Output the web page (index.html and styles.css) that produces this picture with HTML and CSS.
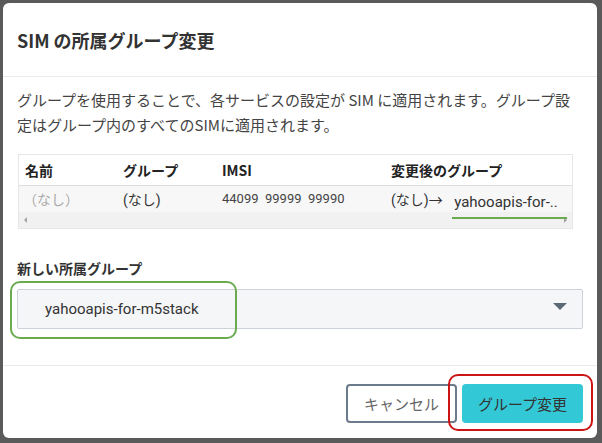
FILE: index.html
```html
<!DOCTYPE html>
<html lang="ja">
<head>
    <meta charset="UTF-8">
    <meta name="viewport" content="width=device-width, initial-scale=1.0">
    <title>SIM の所属グループ変更</title>
    <link rel="stylesheet" href="styles.css">
</head>
<body>
    <div class="dialog">
        <!-- ヘッダー -->
        <div class="dialog-header">
            <h1>SIM の所属グループ変更</h1>
        </div>

        <!-- 本文 -->
        <div class="dialog-body">
            <p class="intro">グループを使用することで、各サービスの設定が SIM に適用されます。グループ設定はグループ内のすべてのSIMに適用されます。</p>

            <div class="table-wrap">
                <table class="sim-table">
                    <thead>
                        <tr>
                            <th class="col-name">名前</th>
                            <th class="col-group">グループ</th>
                            <th class="col-imsi">IMSI</th>
                            <th>変更後のグループ</th>
                        </tr>
                    </thead>
                    <tbody>
                        <tr>
                            <td class="muted">（なし）</td>
                            <td>(なし)</td>
                            <td class="imsi">44099&nbsp; 99999&nbsp; 99990</td>
                            <td>(なし)→ <span class="new-group">yahooapis-for-..</span></td>
                        </tr>
                    </tbody>
                </table>
                <div class="scroll-bar">
                    <span class="arrow-left"></span>
                    <span class="arrow-right"></span>
                </div>
                <div class="mark-line"></div>
            </div>

            <label class="field-label" for="group">新しい所属グループ</label>
            <div class="field">
                <div class="select-box" id="group">
                    <span>yahooapis-for-m5stack</span>
                    <span class="caret"></span>
                </div>
                <div class="mark-green"></div>
            </div>
        </div>

        <!-- フッター -->
        <div class="dialog-footer">
            <button class="btn btn-cancel">キャンセル</button>
            <button class="btn btn-primary">グループ変更</button>
        </div>
    </div>
</body>
</html>
```

FILE: styles.css
```css
body {
    margin: 0;
    padding: 3px;
    background-color: #5a5a5a;
    font-family: "Noto Sans CJK JP", "Noto Sans", sans-serif;
    color: #444;
}
.dialog {
    width: 594px;
    height: 435px;
    background-color: #fff;
    border-radius: 6px;
    display: flex;
    flex-direction: column;
    box-sizing: border-box;
}
.dialog-header {
    height: 73px;
    padding: 0 14px;
    display: flex;
    align-items: center;
    border-bottom: 1px solid #e9ecef;
}
.dialog-header h1 {
    margin: 0;
    font-size: 18px;
    font-weight: 700;
    color: #333;
}
.dialog-body {
    padding: 10px 14px 36px;
}
.intro {
    margin: 0 0 17px;
    font-size: 15px;
    line-height: 25px;
    color: #444;
}
.table-wrap {
    position: relative;
    width: 555px;
    margin-left: 1px;
    border: 1px solid #e6e6e6;
    box-sizing: border-box;
}
.sim-table {
    width: 100%;
    table-layout: fixed;
    border-collapse: collapse;
    font-size: 14px;
    color: #333;
}
.sim-table th {
    box-sizing: border-box;
    height: 30px;
    padding: 0 0 0 6px;
    text-align: left;
    font-weight: 700;
    color: #222;
    border-bottom: 1px solid #ddd;
}
.sim-table td {
    height: 26px;
    padding: 0 0 0 6px;
    background-color: #f7f7f7;
    font-family: Roboto, "Noto Sans CJK JP", sans-serif;
    white-space: nowrap;
    overflow: hidden;
}
.col-name { width: 98px; }
.col-group { width: 99px; }
.col-imsi { width: 169px; }
.sim-table td.muted {
    padding-left: 4px;
    color: #aaa;
    font-family: "Noto Sans CJK JP", sans-serif;
}
.imsi {
    font-size: 13px;
    color: #444;
}
.new-group {
    position: relative;
    top: 2px;
    margin-left: 8px;
    font-size: 15px;
    color: #333;
}
.scroll-bar {
    height: 16px;
    background-color: #f1f1f1;
    display: flex;
    align-items: center;
    justify-content: space-between;
    padding: 0 5px;
}
.arrow-left {
    width: 0;
    height: 0;
    border-top: 3px solid transparent;
    border-bottom: 3px solid transparent;
    border-right: 3px solid #a3a3a3;
}
.arrow-right {
    width: 0;
    height: 0;
    border-top: 3px solid transparent;
    border-bottom: 3px solid transparent;
    border-left: 3px solid #a3a3a3;
}
.mark-line {
    position: absolute;
    left: 433px;
    top: 62px;
    width: 115px;
    height: 2px;
    background-color: #6aab4f;
}
.field-label {
    display: block;
    margin-top: 29px;
    font-size: 14px;
    line-height: 20px;
    font-weight: 700;
    color: #333;
}
.field {
    position: relative;
    margin-top: 11px;
}
.select-box {
    height: 40px;
    box-sizing: border-box;
    border: 1px solid #ccd2d9;
    border-radius: 2px;
    background-color: #f5f6f8;
    display: flex;
    align-items: center;
    justify-content: space-between;
    padding: 0 15px 0 27px;
    font-family: Roboto, sans-serif;
    font-size: 15px;
    color: #333;
}
.caret {
    width: 0;
    height: 0;
    border-left: 7px solid transparent;
    border-right: 7px solid transparent;
    border-top: 7px solid #5a6878;
    margin-top: -4px;
}
.mark-green {
    position: absolute;
    left: -7px;
    top: -8px;
    width: 227px;
    height: 58px;
    box-sizing: border-box;
    border: 2px solid #6aab4f;
    border-radius: 10px;
}
.dialog-footer {
    margin-top: auto;
    border-top: 1px solid #e9ecef;
    padding: 18px 14px 15px;
    display: flex;
    justify-content: flex-end;
    gap: 5px;
}
.btn {
    height: 39px;
    padding: 0;
    border-radius: 4px;
    font-family: "Noto Sans CJK JP", sans-serif;
    font-size: 15px;
    white-space: nowrap;
    cursor: pointer;
}
.btn-cancel {
    width: 111px;
    background-color: #fff;
    border: 2px solid #6b7b8c;
    color: #666;
}
.btn-primary {
    position: relative;
    width: 121px;
    background-color: #33c8d5;
    border: none;
    color: #333;
}
.btn-primary::after {
    content: "";
    position: absolute;
    left: -14px;
    top: -10px;
    width: 145px;
    height: 57px;
    box-sizing: border-box;
    border: 2px solid #cc1414;
    border-radius: 10px;
    pointer-events: none;
}
```
